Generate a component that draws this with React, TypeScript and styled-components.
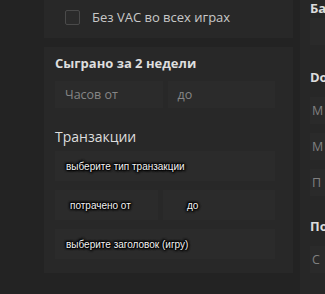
import React from "react";
import styled, { createGlobalStyle } from "styled-components";

const GlobalStyle = createGlobalStyle`
  html, body {
    margin: 0;
    padding: 0;
    background: #232323;
    overflow: hidden;
  }
  body {
    font-family: "Open Sans", "Noto Sans", sans-serif;
  }
`;

const Page = styled.div`
  width: 325px;
  height: 294px;
  display: flex;
  gap: 7px;
  padding-left: 44px;
  box-sizing: border-box;
  overflow: hidden;
`;

const LeftColumn = styled.div`
  width: 249px;
  flex-shrink: 0;
  display: flex;
  flex-direction: column;
  gap: 9px;
`;

const Card = styled.div`
  background: #282828;
  padding: 0 18px 0 11px;
  display: flex;
  flex-direction: column;
`;

const CheckRow = styled.label`
  display: flex;
  align-items: center;
  gap: 12px;
  padding: 8px 10px 12px;
  color: #c8c8c8;
  font-size: 13px;
`;

const Box = styled.span`
  width: 13px;
  height: 13px;
  border: 1px solid #4a4a4a;
  border-radius: 2px;
  background: #2b2b2b;
`;

const Title = styled.div<{ $bold?: boolean }>`
  color: #dedede;
  font-size: ${(p) => (p.$bold ? "13px" : "14px")};
  font-weight: ${(p) => (p.$bold ? 700 : 400)};
  line-height: 18px;
  margin: ${(p) => (p.$bold ? "7px 0 9px" : "20px 0 5px")};
`;

const Row = styled.div`
  display: flex;
  gap: 5px;
`;

const Field = styled.div<{ $height?: number; $indent?: number }>`
  flex: 1;
  height: ${(p) => p.$height || 27}px;
  background: #2b2b2b;
  display: flex;
  align-items: center;
  padding-left: ${(p) => p.$indent ?? 10}px;
  color: #868686;
  font-size: 12.5px;
  box-sizing: border-box;
`;

const Hint = styled.span`
  font-family: "Liberation Sans", Arial, sans-serif;
  font-size: 10px;
  color: #f2f2f2;
  text-shadow: 0 0 2px #000, 0 0 2px #000, 0 0 3px #000, 0 0 3px #000,
    1px 1px 2px #000, -1px -1px 2px #000;
`;

const Stack = styled.div`
  display: grid;
  gap: 9px;
  padding-bottom: 14px;
`;

const RightColumn = styled.div`
  flex: 1;
  background: #272727;
  padding-left: 10px;
  display: flex;
  flex-direction: column;
  overflow: hidden;
  white-space: nowrap;
`;

const SideTitle = styled.div<{ $top: number }>`
  color: #dcdcdc;
  font-size: 13px;
  font-weight: 700;
  margin-top: ${(p) => p.$top}px;
  line-height: 16px;
`;

const SideField = styled.div<{ $top: number }>`
  height: 27px;
  flex-shrink: 0;
  margin-top: ${(p) => p.$top}px;
  background: #2a2a2a;
  color: #808080;
  font-size: 12.5px;
  display: flex;
  align-items: center;
  padding-left: 2px;
`;

export default function App() {
  return (
    <Page>
      <GlobalStyle />
      <LeftColumn>
        <Card>
          <CheckRow>
            <Box />
            Без VAC во всех играх
          </CheckRow>
        </Card>
        <Card>
          <Title $bold>Сыграно за 2 недели</Title>
          <Row>
            <Field>Часов от</Field>
            <Field>до</Field>
          </Row>
          <Title>Транзакции</Title>
          <Stack>
            <Field $height={30} $indent={11}>
              <Hint>выберите тип транзакции</Hint>
            </Field>
            <Row>
              <Field $height={30} $indent={15}>
                <Hint>потрачено от</Hint>
              </Field>
              <Field $height={30} $indent={24}>
                <Hint>до</Hint>
              </Field>
            </Row>
            <Field $height={30} $indent={11}>
              <Hint>выберите заголовок (игру)</Hint>
            </Field>
          </Stack>
        </Card>
      </LeftColumn>
      <RightColumn>
        <SideTitle $top={0}>Баланс</SideTitle>
        <SideField $top={2} />
        <SideTitle $top={24}>Dota 2</SideTitle>
        <SideField $top={12}>М</SideField>
        <SideField $top={9}>М</SideField>
        <SideField $top={9}>П</SideField>
        <SideTitle $top={22}>По</SideTitle>
        <SideField $top={12}>С</SideField>
      </RightColumn>
    </Page>
  );
}
